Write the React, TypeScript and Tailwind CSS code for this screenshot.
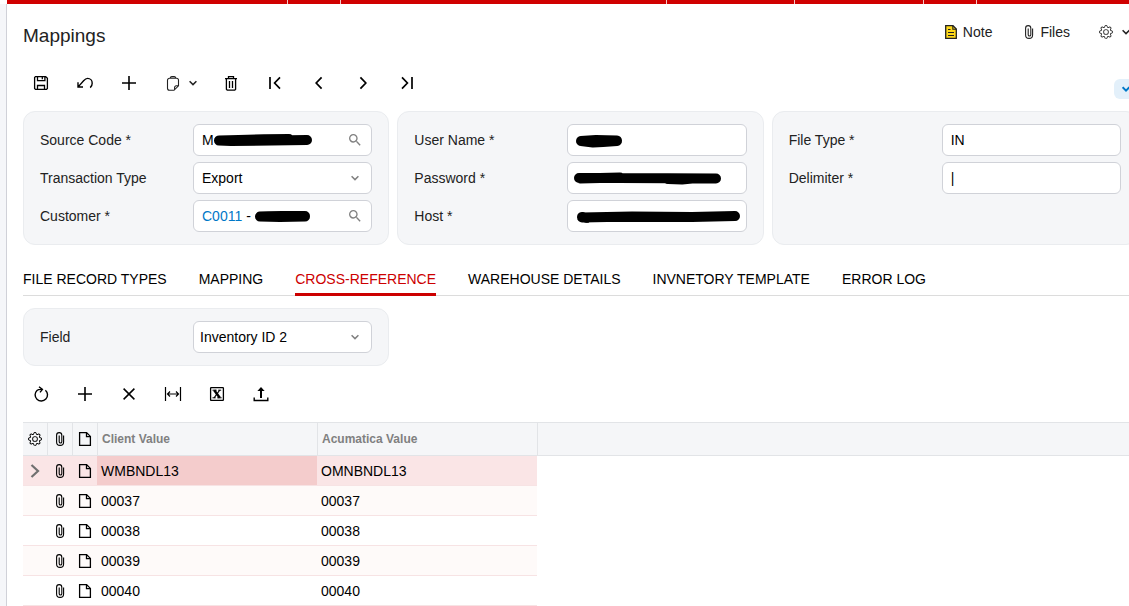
import { useState } from "react";
import type { ReactNode } from "react";
import { BsGear } from "react-icons/bs";
import { MdSearch } from "react-icons/md";

const topTabs = [
  "w-[280px]",
  "w-[52px]",
  "w-[325px]",
  "w-[127px]",
  "w-[128px]",
  "w-[52px]",
];

const tabs = [
  "FILE RECORD TYPES",
  "MAPPING",
  "CROSS-REFERENCE",
  "WAREHOUSE DETAILS",
  "INVNETORY TEMPLATE",
  "ERROR LOG",
];

const rows = [
  { client: "WMBNDL13", acumatica: "OMNBNDL13" },
  { client: "00037", acumatica: "00037" },
  { client: "00038", acumatica: "00038" },
  { client: "00039", acumatica: "00039" },
  { client: "00040", acumatica: "00040" },
];

type IconProps = {
  children: ReactNode;
  stroke?: number;
  width?: number;
};

function Icon({ children, stroke = 1.3, width = 16 }: IconProps) {
  return (
    <svg
      width={width}
      height="16"
      viewBox={`0 0 ${width} 16`}
      fill="none"
      stroke="currentColor"
      strokeWidth={stroke}
      aria-hidden="true"
      className="shrink-0"
    >
      {children}
    </svg>
  );
}

function PaperclipIcon() {
  return (
    <Icon width={10} stroke={1.1}>
      <path d="M8.6 4.5v6.4a3.5 3.5 0 0 1-7 0V4.2a2.6 2.6 0 0 1 5.2 0v6.5a1.3 1.3 0 0 1-2.6 0V4.5" />
    </Icon>
  );
}

function FileIcon() {
  return (
    <Icon width={14} stroke={1.3}>
      <path d="M1.6 1.6h7l3.8 3.8v9H1.6zM8.5 1.6v4h4" />
    </Icon>
  );
}

function ChevronIcon({ stroke = 1.5 }: { stroke?: number }) {
  return (
    <svg
      width="8"
      height="8"
      viewBox="0 0 8 8"
      fill="none"
      stroke="currentColor"
      strokeWidth={stroke}
      aria-hidden="true"
      className="shrink-0"
    >
      <path d="M.6 2.2 4 5.6l3.4-3.4" />
    </svg>
  );
}

function ToolButton({ label, children }: { label: string; children: ReactNode }) {
  return (
    <button
      type="button"
      aria-label={label}
      className="flex h-8 w-11 items-center justify-center text-black"
    >
      {children}
    </button>
  );
}

function Panel({ children }: { children: ReactNode }) {
  return (
    <div className="flex flex-col gap-1.5 rounded-xl border border-[#eaecef] bg-[#f5f6f8] px-4 py-3">
      {children}
    </div>
  );
}

type FieldProps = {
  id: string;
  label: string;
  children: ReactNode;
};

function Field({ id, label, children }: FieldProps) {
  return (
    <div className="flex items-center">
      <label htmlFor={id} className="w-[153px] shrink-0 text-[#222]">
        {label}
      </label>
      <div className="relative flex h-8 min-w-0 flex-1 items-center rounded-md border border-[#d0d2d8] bg-white text-black">
        {children}
      </div>
    </div>
  );
}

function TextInput({ id, value = "" }: { id: string; value?: string }) {
  return (
    <input
      id={id}
      defaultValue={value}
      className="h-full w-full min-w-0 flex-1 bg-transparent px-2 outline-none"
    />
  );
}

function SearchButton({ label }: { label: string }) {
  return (
    <button type="button" aria-label={label} className="mr-2 shrink-0 text-[#808080]">
      <MdSearch size={16} />
    </button>
  );
}

// Marker stroke that hides a private value
function Redaction({ d, stroke = 10 }: { d: string; stroke?: number }) {
  return (
    <svg
      className="pointer-events-none absolute top-0 left-0"
      width="178"
      height="30"
      viewBox="0 0 178 30"
      fill="none"
      stroke="#000"
      strokeWidth={stroke}
      strokeLinecap="round"
      strokeLinejoin="round"
      aria-hidden="true"
    >
      <path d={d} />
    </svg>
  );
}

export default function App() {
  const [activeTab, setActiveTab] = useState("CROSS-REFERENCE");
  const [selected, setSelected] = useState(0);

  return (
    <div className="flex min-h-screen overflow-hidden bg-white font-['Liberation_Sans',Arial,sans-serif] text-sm">
      <aside className="mt-1 w-[7px] shrink-0 border-r border-[#d0d1d8] bg-[#f5f6f9]" />
      <div className="min-w-0 flex-1 overflow-hidden">
        <div className="flex h-1 gap-px bg-[#f3c9c9]">
          {topTabs.map((width, index) => (
            <div key={index} className={`shrink-0 bg-[#d00000] ${width}`} />
          ))}
          <div className="flex-1 bg-[#d00000]" />
        </div>

        <main className="pl-4">
          <header className="flex h-[57px] items-start leading-6">
            <h1 className="mt-5 text-[19px] text-[#222]">Mappings</h1>
            <div className="mt-4 -mr-px ml-auto flex gap-[29px] text-[#222]">
              <button type="button" className="mr-[3px] flex items-center gap-1.5">
                <svg width="12" height="14" viewBox="0 0 12 14" aria-hidden="true">
                  <path
                    d="M.7.7H8l3.3 3.3v9.3H.7z"
                    fill="#ffd91a"
                    stroke="#222"
                    strokeWidth="1.3"
                  />
                  <path
                    d="M7.8.7v3.5h3.5M3 4.5h2.5M3 7.5h6M3 10.5h6"
                    fill="none"
                    stroke="#222"
                    strokeWidth="1.1"
                  />
                </svg>
                Note
              </button>
              <button type="button" className="flex items-center gap-1.5">
                <PaperclipIcon />
                Files
              </button>
              <button type="button" aria-label="Settings" className="flex items-center gap-[9px]">
                <BsGear size={14} className="text-[#333]" />
                <ChevronIcon />
              </button>
            </div>
          </header>

          <div className="-ml-1 flex h-11 items-center">
            <ToolButton label="Save">
              <Icon>
                <path d="M2.5 1.6h10.2l1.7 1.7v10.2l-.9.9h-11l-.9-.9v-11zM4.5 1.6v4h7.4v-4M4.5 14.4V10.5h7v3.9M9.3 2v2.2" />
              </Icon>
            </ToolButton>
            <ToolButton label="Undo">
              <Icon stroke={1.4}>
                <path d="M1 7.2V12h5M1.4 11.6 6.6 5.8C8.2 4 9.3 3.4 10.6 3.4c2.6 0 4.6 2 4.6 4.8 0 2-.6 3.2-2 4.4" />
              </Icon>
            </ToolButton>
            <ToolButton label="Add">
              <Icon stroke={1.6}>
                <path d="M8 1v14M1 8h14" />
              </Icon>
            </ToolButton>
            <button
              type="button"
              aria-label="Clipboard"
              className="flex h-8 w-[58px] items-center gap-2 pl-3.5 text-[#222]"
            >
              <Icon stroke={1.1}>
                <path d="M9 15.3H4.5a2 2 0 0 1-2-2V5.2a2 2 0 0 1 2-2h7a2 2 0 0 1 2 2v5.6L9 15.3zM13.5 10.8h-2.3a1.6 1.6 0 0 0-1.6 1.6v2.4M5.2 3.2c.2-1.2.8-1.6 1.6-1.6h2.4c.8 0 1.4.4 1.6 1.6" />
              </Icon>
              <ChevronIcon />
            </button>
            <ToolButton label="Delete">
              <Icon>
                <path d="M2 3.6h12M5.5 3.4V1.7h5v1.7M3.4 3.8v10.5l.8.8h7.6l.8-.8V3.8M6.5 6v7M9.5 6v7" />
              </Icon>
            </ToolButton>
            <ToolButton label="First">
              <Icon stroke={1.7}>
                <path d="M3 2v12M13 2.4 7.6 8l5.4 5.6" />
              </Icon>
            </ToolButton>
            <ToolButton label="Previous">
              <Icon stroke={1.7}>
                <path d="M10.6 2.4 5.2 8l5.4 5.6" />
              </Icon>
            </ToolButton>
            <ToolButton label="Next">
              <Icon stroke={1.7}>
                <path d="M5.4 2.4 10.8 8l-5.4 5.6" />
              </Icon>
            </ToolButton>
            <ToolButton label="Last">
              <Icon stroke={1.7}>
                <path d="M3 2.4 8.4 8 3 13.6M13 2v12" />
              </Icon>
            </ToolButton>
            <button
              type="button"
              aria-label="Collapse form"
              className="-mr-2 mb-1.5 ml-auto flex h-5 w-[23px] items-center justify-center self-end rounded-md bg-[#e3f0fa] text-[#0078c8]"
            >
              <ChevronIcon stroke={2} />
            </button>
          </div>

          <form className="mt-1.5 -mr-[9px] grid grid-cols-3 gap-2">
            <Panel>
              <Field id="source-code" label="Source Code *">
                <TextInput id="source-code" value="M" />
                <Redaction d="M25 15.5C40 15 75 14 95 14M25 15.5l12 .5 76-1" />
                <SearchButton label="Find source code" />
              </Field>
              <Field id="transaction-type" label="Transaction Type">
                <select
                  id="transaction-type"
                  className="h-full w-full appearance-none bg-transparent px-2 outline-none"
                >
                  <option>Export</option>
                </select>
                <span className="pointer-events-none absolute right-3 text-[#808080]">
                  <ChevronIcon />
                </span>
              </Field>
              <Field id="customer" label="Customer *">
                <a href="#customer" className="ml-2 shrink-0 text-[#0078c8]">
                  C0011
                </a>
                <input
                  id="customer"
                  defaultValue="-"
                  className="h-full w-full min-w-0 flex-1 bg-transparent pl-1 outline-none"
                />
                <Redaction d="M66 15.5C75 14.5 90 15 111 15M66 15.5l20 .5 25-.5" />
                <SearchButton label="Find customer" />
              </Field>
            </Panel>
            <Panel>
              <Field id="user-name" label="User Name *">
                <TextInput id="user-name" />
                <Redaction d="M13 16l12 1.5 10-.5 14-1M13 16l15-1 21 .5" />
              </Field>
              <Field id="password" label="Password *">
                <TextInput id="password" />
                <Redaction d="M11 15h40l97 .5M12 15.5l40-1M100 16l14 .5 10-1" />
              </Field>
              <Field id="host" label="Host *">
                <TextInput id="host" />
                <Redaction d="M14 16.5l50-1 60 .5 43-1M14 16l5 1M40 16h75" />
              </Field>
            </Panel>
            <Panel>
              <Field id="file-type" label="File Type *">
                <TextInput id="file-type" value="IN" />
              </Field>
              <Field id="delimiter" label="Delimiter *">
                <TextInput id="delimiter" value="|" />
              </Field>
            </Panel>
          </form>

          <nav className="mt-[17px] flex gap-8 border-b border-[#dcdcdc]">
            {tabs.map((tab) => (
              <button
                key={tab}
                type="button"
                onClick={() => setActiveTab(tab)}
                className={`-mb-px h-[34px] shrink-0 border-b-3 pt-[3px] ${
                  tab === activeTab
                    ? "border-[#cc0000] text-[#cc0000]"
                    : "border-transparent text-black"
                }`}
              >
                {tab}
              </button>
            ))}
          </nav>

          <div className="mt-3 -mr-[9px] grid grid-cols-3 gap-2">
            <Panel>
              <Field id="field" label="Field">
                <select
                  id="field"
                  className="h-full w-full appearance-none bg-transparent px-1.5 outline-none"
                >
                  <option>Inventory ID 2</option>
                </select>
                <span className="pointer-events-none absolute right-3 text-[#808080]">
                  <ChevronIcon />
                </span>
              </Field>
            </Panel>
          </div>

          <div className="-ml-1 flex h-14 items-center">
            <ToolButton label="Refresh">
              <Icon stroke={1.4}>
                <path d="M12.4 4.2A6.2 6.2 0 1 1 4 4.4C5 3.5 6.5 3.2 9 3.4M6 .8l3.4 2.6L7 6.4" />
              </Icon>
            </ToolButton>
            <ToolButton label="Add row">
              <Icon stroke={1.6}>
                <path d="M8 1v14M1 8h14" />
              </Icon>
            </ToolButton>
            <ToolButton label="Delete row">
              <Icon stroke={1.5}>
                <path d="m2.6 2.6 10.8 10.8M13.4 2.6 2.6 13.4" />
              </Icon>
            </ToolButton>
            <ToolButton label="Fit to screen">
              <Icon width={18} stroke={1.2}>
                <path d="M1.5 1v14M16.5 1v14M3.5 8h11M6 5.5 3.5 8 6 10.5M12 5.5 14.5 8 12 10.5" />
              </Icon>
            </ToolButton>
            <ToolButton label="Export to Excel">
              <Icon stroke={1.3}>
                <rect x="1.6" y="1.6" width="12.8" height="12.8" rx=".6" />
                <path d="M3.5 4.2h4.2M9.2 4.2h3M3.5 11.8h3.2M8.2 11.8h4.4" strokeWidth="1" />
                <path d="m5.2 4.2 5.6 7.6" strokeWidth="2.4" />
                <path d="m10.7 4.2-5.6 7.6" strokeWidth="1.1" />
              </Icon>
            </ToolButton>
            <ToolButton label="Load records from file">
              <Icon stroke={1.4}>
                <path d="M1.2 11.5v3h13.6v-3" />
                <path d="M8 12V3.5" strokeWidth="2" />
                <path d="M8 1 4.4 5h7.2z" fill="currentColor" stroke="none" />
              </Icon>
            </ToolButton>
          </div>

          <table className="w-full table-fixed border-separate border-spacing-0 text-left">
            <colgroup>
              <col className="w-6" />
              <col className="w-[25px]" />
              <col className="w-[25px]" />
              <col className="w-[220px]" />
              <col className="w-[220px]" />
              <col />
            </colgroup>
            <thead>
              <tr className="h-[34px] bg-[#f5f6f8] text-xs text-[#808080] *:border-y *:border-[#e2e4e7] *:p-0">
                <th aria-label="Row settings">
                  <BsGear size={14} className="mx-auto text-black" />
                </th>
                <th aria-label="Files" className="border-l text-black">
                  <span className="flex justify-center">
                    <PaperclipIcon />
                  </span>
                </th>
                <th aria-label="Notes" className="border-l text-black">
                  <span className="flex justify-center">
                    <FileIcon />
                  </span>
                </th>
                <th className="border-l">
                  <span className="pl-1">Client Value</span>
                </th>
                <th className="border-l">
                  <span className="pl-1">Acumatica Value</span>
                </th>
                <th aria-label="Empty" className="border-l" />
              </tr>
            </thead>
            <tbody>
              {rows.map((row, index) => {
                const isSelected = index === selected;
                const cell = `border-b border-[#f7e3e4] p-0 ${
                  isSelected ? "bg-[#fae5e6]" : index % 2 === 1 ? "bg-[#fefaf9]" : "bg-white"
                }`;
                return (
                  <tr key={row.client} className="h-[30px]" onClick={() => setSelected(index)}>
                    <td className={cell}>
                      {isSelected && (
                        <span className="flex justify-center text-[#707070]">
                          <Icon stroke={2.2}>
                            <path d="m4.5 2 6.5 6-6.5 6" />
                          </Icon>
                        </span>
                      )}
                    </td>
                    <td className={cell}>
                      <span className="flex justify-center">
                        <PaperclipIcon />
                      </span>
                    </td>
                    <td className={cell}>
                      <span className="flex justify-center">
                        <FileIcon />
                      </span>
                    </td>
                    <td
                      className={
                        isSelected ? "border-b border-[#f7e3e4] bg-[#f4cccc] p-0" : cell
                      }
                    >
                      <span className="pl-1">{row.client}</span>
                    </td>
                    <td className={cell}>
                      <span className="pl-1">{row.acumatica}</span>
                    </td>
                  </tr>
                );
              })}
            </tbody>
          </table>
        </main>
      </div>
    </div>
  );
}
